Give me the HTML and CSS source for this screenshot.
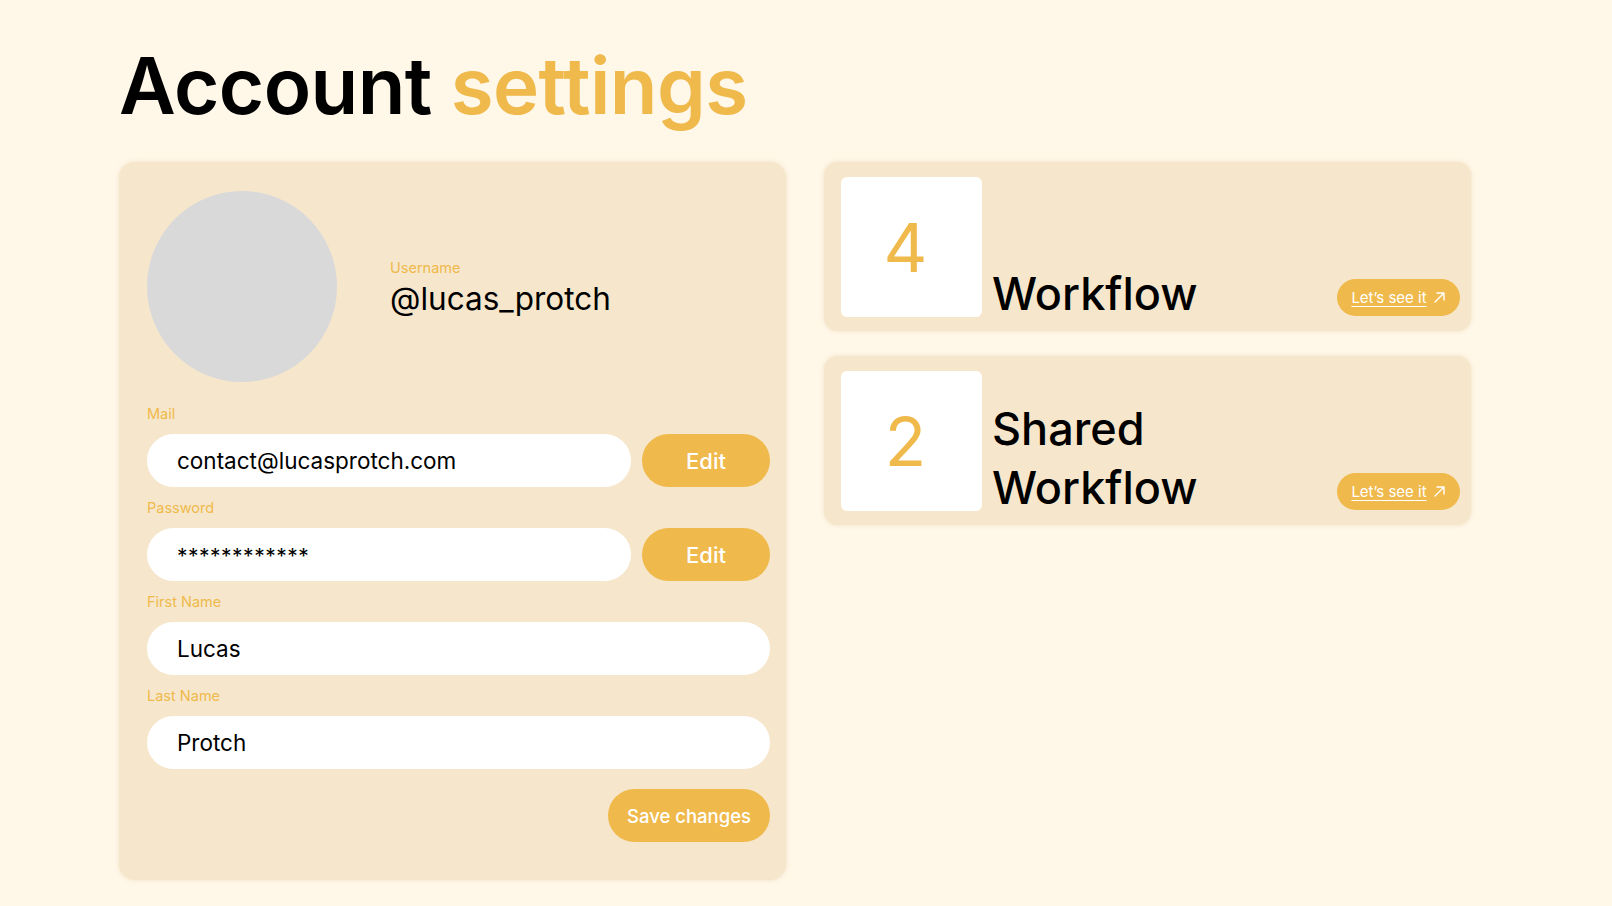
FILE: index.html
```html
<!DOCTYPE html>
<html lang="en">
<head>
<meta charset="utf-8">
<title>Account settings</title>
<link rel="stylesheet" href="styles.css">
</head>
<body>
<div class="page">
  <h1 class="title">Account <span class="accent">settings</span></h1>
  <div class="content">
    <section class="account-card">
      <div class="profile">
        <div class="avatar"></div>
        <div class="user">
          <div class="label">Username</div>
          <div class="username">@lucas_protch</div>
        </div>
      </div>
      <div class="field">
        <div class="label">Mail</div>
        <div class="row">
          <div class="input">contact@lucasprotch.com</div>
          <button class="btn edit">Edit</button>
        </div>
      </div>
      <div class="field">
        <div class="label">Password</div>
        <div class="row">
          <div class="input pwd">************</div>
          <button class="btn edit">Edit</button>
        </div>
      </div>
      <div class="field">
        <div class="label">First Name</div>
        <div class="row">
          <div class="input">Lucas</div>
        </div>
      </div>
      <div class="field">
        <div class="label">Last Name</div>
        <div class="row">
          <div class="input">Protch</div>
        </div>
      </div>
      <div class="actions">
        <button class="btn save">Save changes</button>
      </div>
    </section>
    <div class="stats">
      <div class="stat-card">
        <div class="count">4</div>
        <div class="stat-name">Workflow</div>
        <a class="see" href="#"><span class="see-text">Let’s see it</span>
          <svg class="arrow" width="13" height="13" viewBox="0 0 13 13"><path d="M2 11 L11 2 M4 2 H11 V9" fill="none" stroke="#fff" stroke-width="1.4" stroke-linecap="round" stroke-linejoin="round"/></svg>
        </a>
      </div>
      <div class="stat-card">
        <div class="count">2</div>
        <div class="stat-name">Shared<br>Workflow</div>
        <a class="see" href="#"><span class="see-text">Let’s see it</span>
          <svg class="arrow" width="13" height="13" viewBox="0 0 13 13"><path d="M2 11 L11 2 M4 2 H11 V9" fill="none" stroke="#fff" stroke-width="1.4" stroke-linecap="round" stroke-linejoin="round"/></svg>
        </a>
      </div>
    </div>
  </div>
</div>
</body>
</html>
```
FILE: styles.css
```css
* { box-sizing: border-box; }
html, body { margin: 0; padding: 0; }
body {
  background: #fff7e8;
  font-family: "Inter", "DejaVu Sans", sans-serif;
  color: #000;
  width: 1612px;
  height: 906px;
  overflow: hidden;
}
.page {
  padding: 41px 0 0 119px;
}
.title {
  margin: 0 0 31px 0;
  font-size: 78px;
  font-weight: 600;
  line-height: 90px;
  letter-spacing: -0.6px;
}
.accent { color: #efb94b; }
.content {
  display: flex;
  gap: 38px;
  align-items: flex-start;
}
.account-card {
  width: 667px;
  height: 718px;
  background: #f6e7cc;
  border-radius: 16px;
  padding: 29px 16px 0 28px;
  box-shadow: 0 0 4px rgba(230, 210, 170, 0.6);
}
.profile {
  display: flex;
  align-items: center;
  gap: 53px;
  margin-bottom: 23px;
}
.avatar {
  width: 190px;
  height: 191px;
  border-radius: 50%;
  background: #d9d9d9;
}
.user { padding-top: 4px; }
.label {
  color: #efb94b;
  font-size: 14.5px;
  line-height: 18px;
}
.username {
  font-size: 31.5px;
  line-height: 40px;
  margin-top: 2px;
}
.field { margin-bottom: 12px; }
.field .label { margin-bottom: 11px; }
.row {
  display: flex;
  gap: 11px;
}
.input {
  flex: 1;
  height: 53px;
  background: #fff;
  border-radius: 27px;
  padding-left: 30px;
  display: flex;
  align-items: center;
  font-size: 22.5px;
}
.pwd { font-size: 21px; letter-spacing: 0.5px; padding-top: 4px; }
.btn {
  border: none;
  background: #efb94b;
  color: #fff;
  font-family: inherit;
  border-radius: 27px;
  height: 53px;
  cursor: pointer;
}
.edit {
  width: 128px;
  font-size: 22px;
  font-weight: 500;
}
.actions {
  display: flex;
  justify-content: flex-end;
  margin-top: 20px;
}
.save {
  width: 162px;
  font-size: 18.5px;
  font-weight: 500;
}
.stats {
  width: 647px;
  display: flex;
  flex-direction: column;
  gap: 25px;
}
.stat-card {
  background: #f6e7cc;
  border-radius: 14px;
  height: 169px;
  padding: 15px 11px 14px 17px;
  display: flex;
  align-items: flex-end;
  box-shadow: 0 0 4px rgba(230, 210, 170, 0.6);
}
.count {
  width: 141px;
  height: 140px;
  background: #fff;
  border-radius: 6px;
  color: #efb94b;
  font-size: 68px;
  font-weight: 400;
  padding-right: 12px;
  display: flex;
  align-items: center;
  justify-content: center;
  align-self: flex-start;
}
.stat-name {
  flex: 1;
  margin-left: 10px;
  font-size: 45px;
  font-weight: 500;
  line-height: 59px;
  margin-bottom: -6px;
}
.see {
  display: flex;
  align-items: center;
  gap: 6px;
  height: 37px;
  width: 123px;
  justify-content: center;
  background: #efb94b;
  border-radius: 19px;
  color: #fff;
  font-size: 15px;
  text-decoration: none;
  margin-bottom: 1px;
}
.see-text { text-decoration: underline; text-underline-offset: 3px; }
.arrow { display: block; }
```
